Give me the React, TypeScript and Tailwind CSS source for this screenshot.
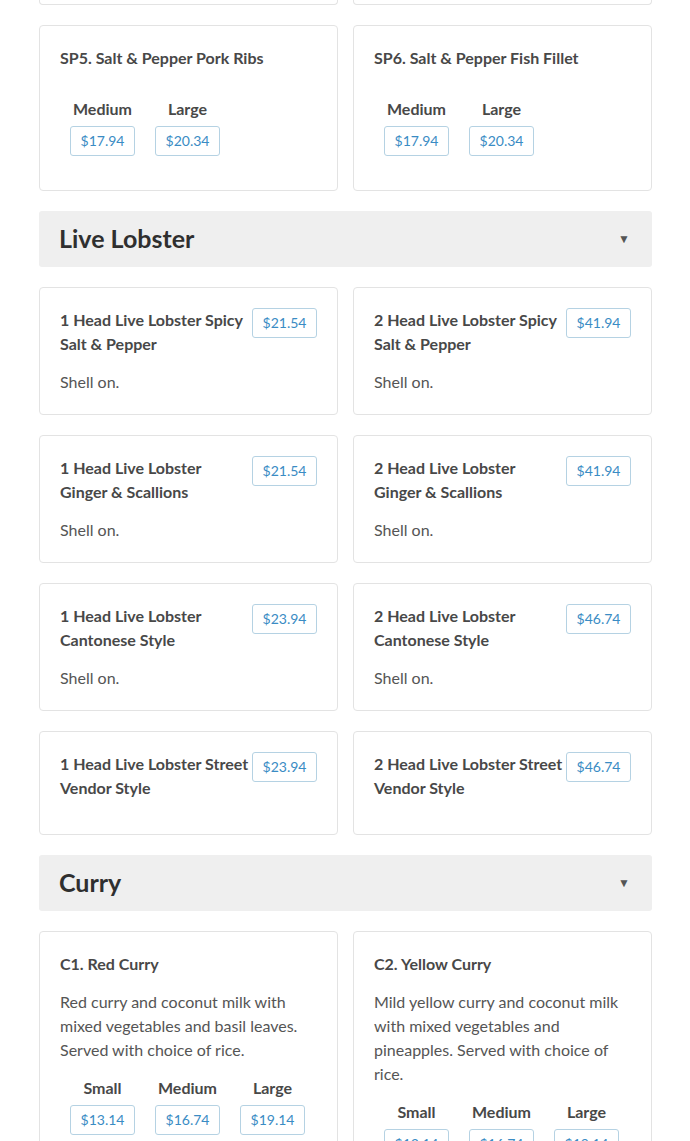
import React from "react";

type Size = { label: string; price: string };
type Item = { title: string; desc?: string; price?: string; sizes?: Size[] };

const PriceBox = ({ price }: { price: string }) => (
  <div className="h-[30px] w-[65px] shrink-0 rounded-[3px] border border-[#b5d2e3] flex items-center justify-center text-[14px] text-[#3a8cc4] leading-none">
    {price}
  </div>
);

const Card = ({ item }: { item: Item }) => (
  <div className="rounded-[4px] border border-[#e3e3e3] bg-white p-5">
    <div className="flex items-start justify-between">
      <div className="text-[16px] leading-6 font-bold text-[#484848]">{item.title}</div>
      {item.price && <PriceBox price={item.price} />}
    </div>
    {item.desc && (
      <p className="mt-[14px] text-[16px] leading-6 text-[#555]">{item.desc}</p>
    )}
    {!item.desc && !item.sizes && <div className="h-[14px]" />}
    {item.sizes && (
      <div className={`flex ${item.desc ? "mt-[14px]" : "mt-[27px]"} mb-[14px]`}>
        {item.sizes.map((s) => (
          <div key={s.label} className="flex flex-col items-center px-[10px]">
            <div className="text-[16px] leading-6 font-bold text-[#484848]">{s.label}</div>
            <div className="mt-[5px]">
              <PriceBox price={s.price} />
            </div>
          </div>
        ))}
      </div>
    )}
  </div>
);

const Header = ({ title }: { title: string }) => (
  <div className="h-14 rounded-[3px] bg-[#efefef] flex items-center justify-between pl-5 pr-[22px]">
    <span className="text-[25px] font-bold text-[#2f2f2f]">{title}</span>
    <span className="text-[12px] text-[#555]">▼</span>
  </div>
);

const Grid = ({ items }: { items: Item[] }) => (
  <div className="grid grid-cols-2 gap-x-[15px] gap-y-5">
    {items.map((it) => (
      <Card key={it.title} item={it} />
    ))}
  </div>
);

export default function App() {
  const sp: Item[] = [
    {
      title: "SP5. Salt & Pepper Pork Ribs",
      sizes: [
        { label: "Medium", price: "$17.94" },
        { label: "Large", price: "$20.34" },
      ],
    },
    {
      title: "SP6. Salt & Pepper Fish Fillet",
      sizes: [
        { label: "Medium", price: "$17.94" },
        { label: "Large", price: "$20.34" },
      ],
    },
  ];
  const lobster: Item[] = [
    { title: "1 Head Live Lobster Spicy Salt & Pepper", price: "$21.54", desc: "Shell on." },
    { title: "2 Head Live Lobster Spicy Salt & Pepper", price: "$41.94", desc: "Shell on." },
    { title: "1 Head Live Lobster Ginger & Scallions", price: "$21.54", desc: "Shell on." },
    { title: "2 Head Live Lobster Ginger & Scallions", price: "$41.94", desc: "Shell on." },
    { title: "1 Head Live Lobster Cantonese Style", price: "$23.94", desc: "Shell on." },
    { title: "2 Head Live Lobster Cantonese Style", price: "$46.74", desc: "Shell on." },
    { title: "1 Head Live Lobster Street Vendor Style", price: "$23.94" },
    { title: "2 Head Live Lobster Street Vendor Style", price: "$46.74" },
  ];
  const curry: Item[] = [
    {
      title: "C1. Red Curry",
      desc: "Red curry and coconut milk with mixed vegetables and basil leaves. Served with choice of rice.",
      sizes: [
        { label: "Small", price: "$13.14" },
        { label: "Medium", price: "$16.74" },
        { label: "Large", price: "$19.14" },
      ],
    },
    {
      title: "C2. Yellow Curry",
      desc: "Mild yellow curry and coconut milk with mixed vegetables and pineapples. Served with choice of rice.",
      sizes: [
        { label: "Small", price: "$13.14" },
        { label: "Medium", price: "$16.74" },
        { label: "Large", price: "$19.14" },
      ],
    },
  ];
  return (
    <div className="h-[1141px] overflow-hidden bg-white" style={{ fontFamily: "Lato, 'Open Sans', sans-serif" }}>
      <div className="w-[613px] ml-[39px] flex flex-col gap-5">
        <div className="grid grid-cols-2 gap-x-[15px]">
          <div className="h-[5px] rounded-b-[4px] border-x border-b border-[#e3e3e3]" />
          <div className="h-[5px] rounded-b-[4px] border-x border-b border-[#e3e3e3]" />
        </div>
        <Grid items={sp} />
        <Header title="Live Lobster" />
        <Grid items={lobster} />
        <Header title="Curry" />
        <Grid items={curry} />
      </div>
    </div>
  );
}
